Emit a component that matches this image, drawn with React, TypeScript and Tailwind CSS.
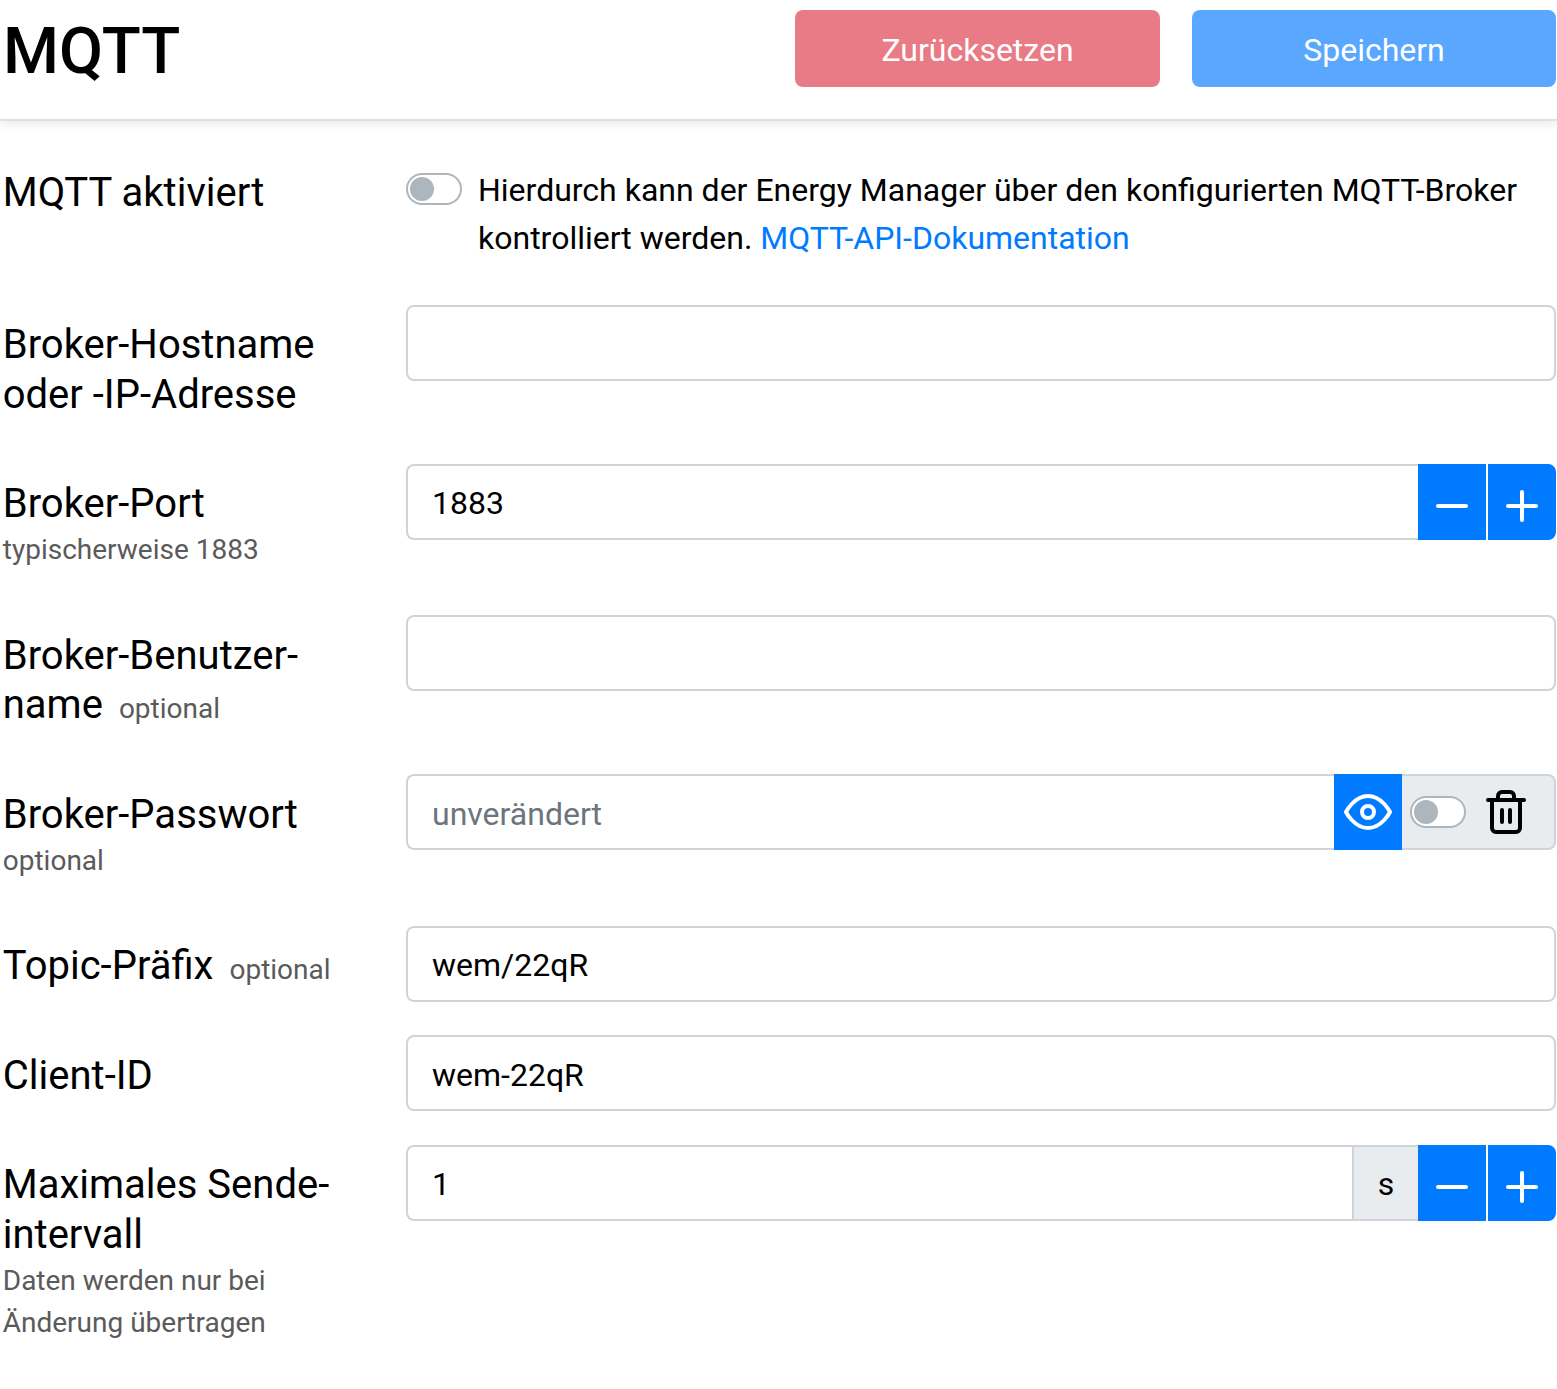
import React from "react";
import { Minus, Plus, Trash2 } from "lucide-react";

const inputBase =
  "h-[76px] min-w-0 flex-1 border-2 border-[#ced4da] bg-white px-6 text-[32px] leading-[48px] text-black placeholder:text-[#6c757d] placeholder:opacity-100 outline-none";

function Row({ label, hint, inlineHint, className, labelClass = "pt-[15px]", children }: {
  label: React.ReactNode;
  hint?: React.ReactNode;
  inlineHint?: string;
  className: string;
  labelClass?: string;
  children: React.ReactNode;
}) {
  return (
    <div className={"flex items-start " + className}>
      <div className={"w-[403.25px] shrink-0 " + labelClass}>
        <div className="text-[40px] leading-[50px] whitespace-nowrap">
          {label}
          {inlineHint && <span className="ml-4 text-[28px] leading-[42px] text-[#5a5a5a]">{inlineHint}</span>}
        </div>
        {hint && <div className="text-[28px] leading-[42px] text-[#5a5a5a]">{hint}</div>}
      </div>
      <div className="flex h-[76px] w-[1150px] shrink-0">{children}</div>
    </div>
  );
}

function Toggle() {
  return (
    <span className="flex h-8 w-14 shrink-0 items-center rounded-full border-2 border-[#adb5bd] bg-white pl-[2px]">
      <span className="size-6 rounded-full bg-[#adb5bd]" />
    </span>
  );
}

function EyeIcon() {
  return (
    <svg className="size-12 shrink-0" viewBox="0 0 24 24" fill="none" stroke="currentColor" strokeWidth="2" strokeLinecap="round" strokeLinejoin="round">
      <path d="M1 12s4-8 11-8 11 8 11 8-4 8-11 8-11-8-11-8z" />
      <circle cx="12" cy="12" r="3" />
    </svg>
  );
}

function Stepper() {
  return (
    <>
      <button className="flex w-[68px] items-center justify-center bg-[#007bff] pt-2 text-white">
        <Minus className="shrink-0" size={48} strokeWidth={2} />
      </button>
      <button className="ml-[2px] flex w-[68px] items-center justify-center rounded-r-lg border-2 border-[#007bff] bg-[#007bff] pt-2 text-white">
        <Plus className="shrink-0" size={48} strokeWidth={2} />
      </button>
    </>
  );
}

export default function App() {
  return (
    <div className="h-[1389px] w-[1557px] overflow-hidden bg-white font-['Roboto',sans-serif] text-black">
      <header className="flex h-[121px] items-start justify-between border-b-2 border-[#dee2e6] pt-[10px] pr-px pl-[3px] shadow-[0_4px_8px_rgba(0,0,0,0.075)]">
        <h1 className="pt-0.5 text-[64px] leading-[80px] font-medium">MQTT</h1>
        <div className="flex gap-8 text-[32px] leading-[48px] text-white">
          <button className="h-[77px] w-[365px] rounded-lg bg-[#e97b86] pt-[3px] pb-px">Zurücksetzen</button>
          <button className="h-[77px] w-[364px] rounded-lg bg-[#59a7ff] pt-[3px] pb-px">Speichern</button>
        </div>
      </header>
      <main className="pl-[2.75px]">
        <div className="flex h-[184px] items-start pt-[45px]">
          <div className="w-[403.25px] shrink-0 pt-0.5 text-[40px] leading-[50px]">MQTT aktiviert</div>
          <div className="flex">
            <div className="mt-[7px] mr-4"><Toggle /></div>
            <p className="text-[32px] leading-[48px] whitespace-nowrap">
              Hierdurch kann der Energy Manager über den konfigurierten MQTT-Broker<br />
              kontrolliert werden. <a className="text-[#007bff]">MQTT-API-Dokumentation</a>
            </p>
          </div>
        </div>
        <Row className="h-[159px]" label={<>Broker-Hostname<br />oder -IP-Adresse</>}>
          <input className={inputBase + " rounded-lg"} />
        </Row>
        <Row className="h-[151px]" label="Broker-Port" hint="typischerweise 1883">
          <input className={inputBase + " rounded-l-lg border-r-0 pt-0.5"} defaultValue="1883" />
          <Stepper />
        </Row>
        <Row className="h-[159px]" labelClass="pt-4" label={<><span className="-mb-px block">Broker-Benutzer-</span>name</>} inlineHint="optional">
          <input className={inputBase + " rounded-lg"} />
        </Row>
        <Row className="h-[152px]" labelClass="pt-4" label="Broker-Passwort" hint="optional">
          <input className={inputBase + " rounded-l-lg border-r-0 pt-1"} placeholder="unverändert" />
          <button className="flex w-[68px] items-center justify-center bg-[#007bff] text-white">
            <EyeIcon />
          </button>
          <div className="flex w-[154px] items-center rounded-r-lg border-2 border-l-0 border-[#ced4da] bg-[#e9ecef] pl-2">
            <Toggle />
            <Trash2 className="ml-4" size={48} strokeWidth={2} />
          </div>
        </Row>
        <Row className="h-[109px]" label="Topic-Präfix" inlineHint="optional">
          <input className={inputBase + " rounded-lg pt-0.5"} defaultValue="wem/22qR" />
        </Row>
        <Row className="h-[110px]" labelClass="pt-4" label="Client-ID">
          <input className={inputBase + " rounded-lg pt-1"} defaultValue="wem-22qR" />
        </Row>
        <Row className="h-[200px]" label={<>Maximales Sende-<br />intervall</>} hint={<>Daten werden nur bei<br />Änderung übertragen</>}>
          <input className={inputBase + " rounded-l-lg border-r-0 pt-0.5"} defaultValue="1" />
          <span className="flex w-[66px] items-center justify-center border-2 border-r-0 border-[#ced4da] bg-[#e9ecef] pt-0.5 text-[32px]">s</span>
          <Stepper />
        </Row>
      </main>
    </div>
  );
}
